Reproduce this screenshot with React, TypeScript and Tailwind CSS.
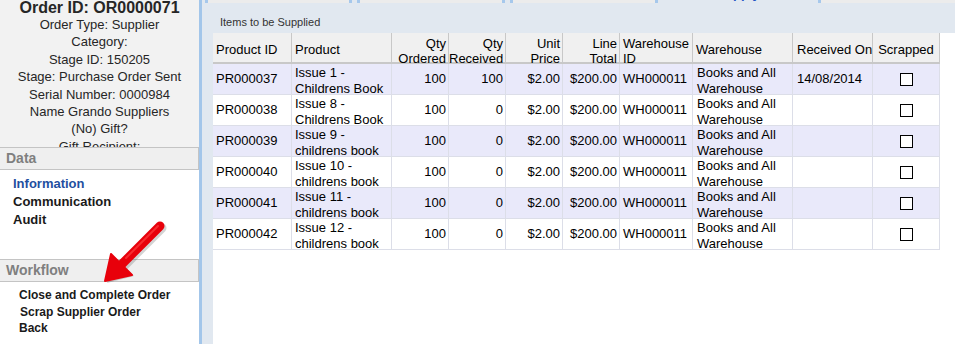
import React from 'react';

const infoLines = [
  'Order Type: Supplier',
  'Category:',
  'Stage ID: 150205',
  'Stage: Purchase Order Sent',
  'Serial Number: 0000984',
  'Name Grando Suppliers',
  '(No) Gift?',
  'Gift Recipient:',
];

const tabs = [
  { label: 'Order', w: 'w-[147px]', active: false },
  { label: 'Details', w: 'w-[148px]', active: false },
  { label: 'Transfers', w: 'w-[148px]', active: false },
  { label: 'Supply', w: 'w-[150px]', active: true },
  { label: 'Preferred Addresses', w: 'w-[150px]', active: false },
];

type Row = {
  id: string;
  product: string[];
  received: string;
  receivedOn: string;
};

const rows: Row[] = [
  { id: 'PR000037', product: ['Issue 1 -', 'Childrens Book'], received: '100', receivedOn: '14/08/2014' },
  { id: 'PR000038', product: ['Issue 8 -', 'Childrens Book'], received: '0', receivedOn: '' },
  { id: 'PR000039', product: ['Issue 9 -', 'childrens book'], received: '0', receivedOn: '' },
  { id: 'PR000040', product: ['Issue 10 -', 'childrens book'], received: '0', receivedOn: '' },
  { id: 'PR000041', product: ['Issue 11 -', 'childrens book'], received: '0', receivedOn: '' },
  { id: 'PR000042', product: ['Issue 12 -', 'childrens book'], received: '0', receivedOn: '' },
];

const cols = 'grid grid-cols-[79px_100px_57px_57px_57px_57px_73px_100px_80px_67px]';

const SectionHeader: React.FC<{ title: string }> = ({ title }) => (
  <div className="h-[23px] bg-[#efefef] border-y border-r border-[#c4c4c4] pl-[6px] flex items-center text-[14px] font-bold text-[#7f7f7f]">
    {title}
  </div>
);

const Arrow: React.FC = () => (
  <svg className="absolute left-0 top-0 pointer-events-none" width="200" height="344" viewBox="0 0 200 344">
    <g opacity="0.25" transform="translate(2,2)">
      <line x1="160" y1="226" x2="120" y2="266" stroke="#555" strokeWidth="9" strokeLinecap="round" />
      <polygon points="105,281 112,254 132,274" fill="#555" />
    </g>
    <line x1="160" y1="226" x2="120" y2="266" stroke="#e8000b" strokeWidth="9" strokeLinecap="round" />
    <polygon points="105,281 111,254 132,275" fill="#e8000b" stroke="#e8000b" strokeWidth="2" strokeLinejoin="round" />
    <line x1="158" y1="226" x2="126" y2="258" stroke="#ff4a4a" strokeWidth="2" strokeLinecap="round" opacity="0.6" />
  </svg>
);

const App: React.FC = () => {
  return (
    <div className="relative flex h-[344px] w-[955px] overflow-hidden bg-white font-['Liberation_Sans',Arial,sans-serif]">
      <aside className="w-[199px] shrink-0 flex flex-col">
        <div className="h-[147px] shrink-0 overflow-hidden bg-[#f2f2f2] text-center text-[#262626]">
          <div className="text-[16px] leading-[16px] font-bold">Order ID: OR0000071</div>
          {infoLines.map(l => (
            <div key={l} className="text-[13px] leading-[17.4px]">{l}</div>
          ))}
        </div>
        <SectionHeader title="Data" />
        <div className="h-[89px] pt-[5px] pl-[13px] text-[13px] leading-[18px] font-bold">
          <div className="text-[#1f4fa0]">Information</div>
          <div className="text-[#1a1a1a]">Communication</div>
          <div className="text-[#1a1a1a]">Audit</div>
        </div>
        <SectionHeader title="Workflow" />
        <div className="pt-[5px] pl-[19px] text-[12px] leading-[16.5px] font-bold text-[#1a1a1a]">
          <div>Close and Complete Order</div>
          <div className="pl-[1px]">Scrap Supplier Order</div>
          <div>Back</div>
        </div>
      </aside>

      <div className="w-[3px] shrink-0 bg-[#a3c6ea]" />

      <main className="flex-1 flex flex-col bg-[#e1e8f0] min-w-0">
        <div className="h-[3px] shrink-0 overflow-hidden">
          <div className="flex -mt-[13px] ml-[3px] gap-[5px]">
            {tabs.map(t => (
              <div
                key={t.label}
                className={`${t.w} shrink-0 h-[16px] text-center text-[13px] leading-[14px] font-bold whitespace-nowrap overflow-hidden border-x-[3px] ${
                  t.active ? 'bg-[#e1e8f0] text-[#1f55c4] border-transparent' : 'bg-[#ececec] text-[#222] border-[#a6c8ec]'
                }`}
              >
                {t.label}
              </div>
            ))}
          </div>
        </div>

        <div className="h-[30px] shrink-0 pl-[18px] pt-[13px] text-[11px] leading-[13px] text-[#333]">
          Items to be Supplied
        </div>

        <div className="flex-1 pl-[11px] flex">
          <div className="flex-1 bg-white">
            <div className="w-[727px] text-[13px] text-black">
              <div className={`${cols} h-[31px] bg-[#f0f0f0] border-b-2 border-[#c8c8c8] leading-[15px]`}>
                <div className="border-r border-[#c8c8c8] pl-[3px] flex items-center">Product ID</div>
                <div className="border-r border-[#c8c8c8] pl-[3px] flex items-center">Product</div>
                <div className="border-r border-[#c8c8c8] pr-[2px] pt-[3px] text-right">Qty<br />Ordered</div>
                <div className="border-r border-[#c8c8c8] pr-[2px] pt-[3px] text-right">Qty<br />Received</div>
                <div className="border-r border-[#c8c8c8] pr-[2px] pt-[3px] text-right">Unit<br />Price</div>
                <div className="border-r border-[#c8c8c8] pr-[2px] pt-[3px] text-right">Line<br />Total</div>
                <div className="border-r border-[#c8c8c8] pl-[3px] pt-[3px]">Warehouse<br />ID</div>
                <div className="border-r border-[#c8c8c8] pl-[3px] flex items-center">Warehouse</div>
                <div className="border-r border-[#c8c8c8] pl-[4px] flex items-center whitespace-nowrap">Received On</div>
                <div className="border-r border-[#c8c8c8] flex items-center justify-center">Scrapped</div>
              </div>
              {rows.map((r, i) => (
                <div
                  key={r.id}
                  className={`${cols} h-[31px] border-b border-[#dcdee8] leading-[16px] ${i % 2 === 0 ? 'bg-[#e9e9fa]' : 'bg-white'}`}
                >
                  <div className="border-r border-[#dcdee8] pl-[3px] flex items-center">{r.id}</div>
                  <div className="border-r border-[#dcdee8] pl-[3px] pt-[1px] overflow-hidden">
                    {r.product[0]}<br />{r.product[1]}
                  </div>
                  <div className="border-r border-[#dcdee8] pr-[2px] flex items-center justify-end">100</div>
                  <div className="border-r border-[#dcdee8] pr-[2px] flex items-center justify-end">{r.received}</div>
                  <div className="border-r border-[#dcdee8] pr-[2px] flex items-center justify-end">$2.00</div>
                  <div className="border-r border-[#dcdee8] pr-[2px] flex items-center justify-end">$200.00</div>
                  <div className="border-r border-[#dcdee8] pl-[3px] flex items-center">WH000011</div>
                  <div className="border-r border-[#dcdee8] pl-[4px] pt-[1px] overflow-hidden">
                    Books and All<br />Warehouse
                  </div>
                  <div className="border-r border-[#dcdee8] pl-[4px] flex items-center">{r.receivedOn}</div>
                  <div className="border-r border-[#dcdee8] flex items-center justify-center">
                    <span className="block w-[13px] h-[13px] border border-black bg-white" />
                  </div>
                </div>
              ))}
            </div>
          </div>
        </div>
      </main>

      <Arrow />
    </div>
  );
};

export default App;
